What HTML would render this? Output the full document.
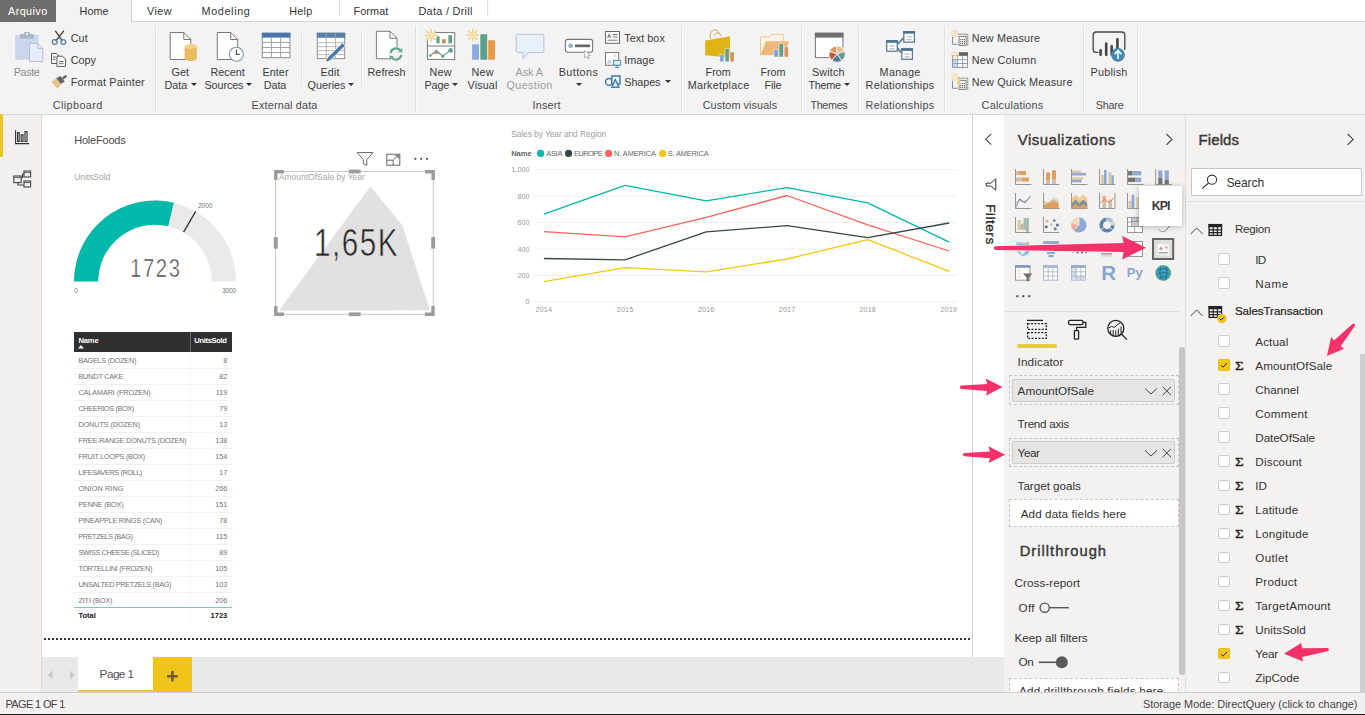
<!DOCTYPE html>
<html lang="en">
<head>
<meta charset="utf-8">
<title>Power BI Desktop</title>
<style>
*{box-sizing:border-box;margin:0;padding:0}
html,body{width:1365px;height:715px;overflow:hidden;background:#fff}
body{font-family:"Liberation Sans",sans-serif;color:#333;position:relative;font-size:12px}
.a{position:absolute}
.t{position:absolute;white-space:pre;line-height:1}
svg{position:absolute;overflow:visible}
.sep{position:absolute;width:1px;background:#e0e0e0;box-shadow:1px 0 0 #fafafa}
.cb{position:absolute;width:12px;height:11.6px;border:1px solid #cfcdcb;background:#fff;border-radius:2px}
.cb.on{background:#f2c811;border-color:#e9c00e}
.well{position:absolute;border:1px dashed #c8c6c4}
.pill{position:absolute;background:#e6e5e4;border:1px solid #cfcdcb;border-radius:2px}
.row{position:absolute;left:74px;width:158px;height:1px;background:#f1f1f1}
</style>
</head>
<body>
<div class="a" style="left:0;top:0;width:1365px;height:22px;background:#fff"></div>
<div class="a" style="left:0;top:21px;width:1365px;height:94px;background:#f3f3f3;border-top:1px solid #d4d4d4;border-bottom:1px solid #d8d8d8"></div>
<div class="a" style="left:0;top:0;width:56px;height:22px;background:#6e6e6e"></div>
<div class="a" style="left:56px;top:0;width:76px;height:22px;background:#f3f3f3;border-right:1px solid #d4d4d4"></div>
<div class="sep" style="left:339px;top:0;height:16px;background:#dcdcdc"></div>
<div class="sep" style="left:487px;top:0;height:16px;background:#dcdcdc"></div>
<div class="a" style="left:0;top:115px;width:42px;height:578px;background:#f1f0ef;border-right:1px solid #d9d9d9"></div>
<div class="a" style="left:0;top:114px;width:2.7px;height:43px;background:#e8c520"></div>
<div class="a" style="left:42px;top:115px;width:931px;height:542px;background:#fff"></div>
<div class="a" style="left:42px;top:657px;width:962px;height:36px;background:#e9e9e9"></div>
<div class="a" style="left:78px;top:657px;width:75px;height:36px;background:#fff;border-bottom:3px solid #e6c84f"></div>
<div class="a" style="left:153px;top:657px;width:39px;height:36px;background:#f0c41b"></div>
<div class="a" style="left:972px;top:115px;width:32px;height:542px;background:#fff;border-left:1px solid #d0d0d0"></div>
<div class="a" style="left:1004px;top:115px;width:182px;height:578px;background:#f3f2f1;border-right:1px solid #e0dedc"></div>
<div class="a" style="left:1186px;top:115px;width:179px;height:578px;background:#f3f2f1"></div>
<div class="a" style="left:0;top:692px;width:1365px;height:21px;background:#f1f0ef;border-top:1px solid #cfcfcf;z-index:5"></div>
<div class="a" style="left:0;top:713.6px;width:1365px;height:1.4px;background:#111;z-index:5"></div>
<div class="sep" style="left:155px;top:26px;height:86px"></div>
<div class="sep" style="left:415px;top:26px;height:86px"></div>
<div class="sep" style="left:681px;top:26px;height:86px"></div>
<div class="sep" style="left:801px;top:26px;height:86px"></div>
<div class="sep" style="left:858px;top:26px;height:86px"></div>
<div class="sep" style="left:944px;top:26px;height:86px"></div>
<div class="sep" style="left:1083px;top:26px;height:86px"></div>
<div class="sep" style="left:1137px;top:26px;height:86px"></div>
<div class="sep" style="left:301px;top:32px;height:54px"></div>
<div class="sep" style="left:361px;top:32px;height:54px"></div>
<svg style="left:190.5px;top:83.0px" width="6" height="3" viewBox="0 0 6 3"><path d="M0 0h6L3 3z" fill="#333"/></svg>
<svg style="left:246.4px;top:83.0px" width="6" height="3" viewBox="0 0 6 3"><path d="M0 0h6L3 3z" fill="#333"/></svg>
<svg style="left:348.3px;top:83.0px" width="6" height="3" viewBox="0 0 6 3"><path d="M0 0h6L3 3z" fill="#333"/></svg>
<svg style="left:451.5px;top:83.0px" width="6" height="3" viewBox="0 0 6 3"><path d="M0 0h6L3 3z" fill="#333"/></svg>
<svg style="left:575.7px;top:83.0px" width="6" height="3" viewBox="0 0 6 3"><path d="M0 0h6L3 3z" fill="#333"/></svg>
<svg style="left:664.5px;top:80.1px" width="6" height="3" viewBox="0 0 6 3"><path d="M0 0h6L3 3z" fill="#333"/></svg>
<svg style="left:843.5px;top:83.0px" width="6" height="3" viewBox="0 0 6 3"><path d="M0 0h6L3 3z" fill="#333"/></svg>
<svg style="left:0;top:0" width="1365" height="114" viewBox="0 0 1365 114"><rect x="15.2" y="35" width="23.3" height="24.8" fill="#ccd6ea"/><rect x="20" y="34" width="14" height="4.6" fill="#a9b7cb"/><rect x="24.2" y="32" width="5.6" height="3" fill="#a9b7cb"/><rect x="26" y="33" width="2" height="2" fill="#e8edf5"/><path d="M29.5 43.5h8.4l5 5v13h-13.4z" fill="#e8eef9" stroke="#b3bfd8" stroke-width="1"/><path d="M37.9 43.5v5h5" fill="none" stroke="#b3bfd8" stroke-width="1"/><g fill="none" stroke-linecap="round"><path d="M55.6 31.2L62 40.6M63.4 31.2L56 40.6" stroke="#4f4f4f" stroke-width="1.5"/><circle cx="54.7" cy="42" r="2.4" stroke="#5b7d9e" stroke-width="1.3"/><circle cx="63.3" cy="42" r="2.4" stroke="#5b7d9e" stroke-width="1.3"/></g><g fill="#f3f3f3" stroke="#5a5a5a" stroke-width="1"><path d="M51.5 53.5h5l2.5 2.5v7.5h-7.5z"/><path d="M57 56.2h5.5l3 3v7.2H57z" fill="#fff"/></g><path d="M53 57h3M53 59.5h2.5M59 61.5h4.5M59 63.7h4.5" stroke="#5a5a5a" stroke-width="0.9"/><path d="M51.3 82l5.2-3.4 4.6 5.6-3.4 4.6z" fill="#e7c083"/><path d="M56.2 78.3l4.2-2.4 4.4 5.6-3.8 2.6z" fill="#5e6468"/><path d="M62 77.6l3.8-2.6 1.4 1.8-3.8 2.6z" fill="#5e6468"/><path d="M170.2 32.5h13.600000000000001l7 7v20h-20.6z" fill="#fff" stroke="#787878" stroke-width="1"/><path d="M183.79999999999998 32.5v7h7" fill="none" stroke="#787878" stroke-width="1"/><path d="M184.6 46.5v12a6.1 2.4 0 0 0 12.2 0v-12z" fill="#e9bc5e"/><ellipse cx="190.7" cy="46.5" rx="6.1" ry="2.4" fill="#f2d089"/><path d="M217.3 32.5h13.399999999999999l7 7v20h-20.4z" fill="#fff" stroke="#787878" stroke-width="1"/><path d="M230.70000000000002 32.5v7h7" fill="none" stroke="#787878" stroke-width="1"/><circle cx="236.4" cy="54.2" r="7" fill="#fff" stroke="#7d96ba" stroke-width="1.1"/><path d="M236.4 49.4v5h3.4" fill="none" stroke="#555" stroke-width="1.2"/><rect x="262.3" y="33.2" width="27.6" height="24.5" fill="#fff" stroke="#8c8c8c" stroke-width="1"/><rect x="261.8" y="32.8" width="28.6" height="4.8" fill="#4675b0"/><path d="M262 42.5h28M262 47.5h28M262 52.5h28M271.4 37.5v20M280.6 37.5v20" stroke="#9a9a9a" stroke-width="0.9"/><rect x="317.3" y="33.2" width="27.4" height="25.4" fill="#fff" stroke="#8c8c8c" stroke-width="1"/><rect x="316.8" y="32.8" width="28.4" height="5" fill="#5781ab"/><path d="M317 42.7h28M317 46.7h28M317 50.7h28M317 54.7h28M326.3 33v25.5M335.5 33v25.5" stroke="#a4a4a4" stroke-width="0.8"/><path d="M326.2 61.6l1.4-4.2 14.8-14.6 2.9 2.9-14.8 14.6z" fill="#4a79af" stroke="#f3f3f3" stroke-width="1"/><path d="M326.2 61.6l1-3 2 2z" fill="#555"/><path d="M376.4 31.3h13.600000000000001l7 7v20.5h-20.6z" fill="#fff" stroke="#787878" stroke-width="1"/><path d="M390.0 31.3v7h7" fill="none" stroke="#787878" stroke-width="1"/><circle cx="396" cy="54" r="7.6" fill="#f3f3f3"/><g fill="none" stroke="#63a98e" stroke-width="2.2"><path d="M390.6 53a5.5 5.5 0 0 1 9.6-2.6"/><path d="M401.4 55a5.5 5.5 0 0 1-9.6 2.6"/></g><path d="M398.3 51.8l4.2 0.6-0.5-4.4z" fill="#63a98e"/><path d="M393.7 56.2l-4.2-0.6 0.5 4.4z" fill="#63a98e"/><rect x="427.4" y="32.6" width="27.3" height="26.8" fill="#fff" stroke="#777" stroke-width="1"/><path d="M427.4 46h27.3" stroke="#777" stroke-width="1"/><rect x="436.4" y="36.4" width="3.2" height="7" fill="#62a08e"/><rect x="442" y="39.2" width="3.6" height="4.2" fill="#c98b5c"/><rect x="448.4" y="35.2" width="3.6" height="8.2" fill="#62a08e"/><path d="M433.6 54l2.8-4.6 2.8 4.6z" fill="#d59463"/><path d="M430.3 55.6l6.1-5 6.4 5.6 7.5-5.8" fill="none" stroke="#6b9f95" stroke-width="1.2"/><circle cx="430.3" cy="55.6" r="1.3" fill="#6b9f95"/><circle cx="442.8" cy="56.2" r="1.6" fill="#6b9f95"/><circle cx="450.6" cy="50.4" r="2.3" fill="#6b9f95"/><circle cx="431.2" cy="35.6" r="5" fill="#f3f3f3"/><g stroke="#f1cf85" stroke-width="1.5" stroke-linecap="round"><line x1="433.4" y1="35.6" x2="437.2" y2="35.6"/><line x1="432.8" y1="37.2" x2="435.4" y2="39.8"/><line x1="431.2" y1="37.8" x2="431.2" y2="41.6"/><line x1="429.6" y1="37.2" x2="427.0" y2="39.8"/><line x1="429.0" y1="35.6" x2="425.2" y2="35.6"/><line x1="429.6" y1="34.0" x2="427.0" y2="31.4"/><line x1="431.2" y1="33.4" x2="431.2" y2="29.6"/><line x1="432.8" y1="34.0" x2="435.4" y2="31.4"/></g><circle cx="431.2" cy="35.6" r="2.7" fill="#f8e2a8"/><rect x="472.1" y="44.3" width="6.9" height="15.4" fill="#8aabda"/><rect x="480.3" y="34.2" width="6.9" height="25.5" fill="#5fa08c"/><rect x="488.2" y="40.2" width="6.8" height="19.5" fill="#ec9745"/><g stroke="#f1cf85" stroke-width="1.5" stroke-linecap="round"><line x1="475.0" y1="35.2" x2="478.4" y2="35.2"/><line x1="474.4" y1="36.8" x2="476.8" y2="39.2"/><line x1="472.8" y1="37.4" x2="472.8" y2="40.8"/><line x1="471.2" y1="36.8" x2="468.8" y2="39.2"/><line x1="470.6" y1="35.2" x2="467.2" y2="35.2"/><line x1="471.2" y1="33.6" x2="468.8" y2="31.2"/><line x1="472.8" y1="33.0" x2="472.8" y2="29.6"/><line x1="474.4" y1="33.6" x2="476.8" y2="31.2"/></g><circle cx="472.8" cy="35.2" r="2.7" fill="#f8e2a8"/><path d="M518.2 34.3h23.7a2 2 0 0 1 2 2v14.2a2 2 0 0 1-2 2h-13.6l-5.2 6v-6h-4.9a2 2 0 0 1-2-2V36.3a2 2 0 0 1 2-2z" fill="#e9f0fa" stroke="#b3c3dc" stroke-width="1"/><rect x="565.4" y="39.4" width="27.2" height="12.8" rx="2.2" fill="#fff" stroke="#777" stroke-width="1.1"/><circle cx="570.6" cy="45.8" r="2.3" fill="#8fb4cc"/><rect x="575" y="44.5" width="15" height="2.7" fill="#666"/><path d="M584.4 50.4l0.4 7.6 1.9-1.9 1.4 2.8 1.2-0.6-1.4-2.8 2.6-0.2z" fill="#fff" stroke="#999" stroke-width="0.7"/><rect x="605.5" y="31.5" width="14" height="11.8" fill="#fff" stroke="#666" stroke-width="1"/><path d="M607.6 38l1.6-4 1.6 4M608.2 36.7h2M612.6 34.5h5M612.6 37h5M607.5 40.2h10" fill="none" stroke="#666" stroke-width="0.9"/><rect x="605.5" y="52.6" width="13.2" height="12.6" fill="#fff" stroke="#777" stroke-width="1"/><path d="M606.5 63.5l2.8-4.2 2.8 4.2z" fill="#b7c7e0"/><circle cx="615" cy="55.8" r="1.3" fill="#e9d9b0"/><rect x="613.6" y="60.4" width="7" height="4.8" fill="#dff0f5" stroke="#4a90a8" stroke-width="1"/><path d="M617.1 65.2v2M615 67.3h4.4" stroke="#4a90a8" stroke-width="1"/><circle cx="608.9" cy="81.9" r="3.4" fill="none" stroke="#3a7ca8" stroke-width="1.5"/><rect x="611.8" y="76" width="8.2" height="8" fill="#f3f3f3" stroke="#3a7ca8" stroke-width="1.5"/><path d="M615.3 79.6l3.6 7.8h-7.2z" fill="#d6e6f0" stroke="#3a7ca8" stroke-width="1.3"/><path d="M710.4 38.4c-0.6-5 1.2-8.6 4.6-8.6 2.6 0 3.8 2 4 4.6M714.6 36c0.4-2.4 1.4-3.4 2.8-3.4 2 0 3.2 1.6 3.6 3.6" fill="none" stroke="#c7a544" stroke-width="0.9"/><path d="M705.2 40.6l24.8-4.4v21.6l-24.8-2.6z" fill="#e0b416"/><rect x="719.6" y="54.6" width="4.6" height="7.4" fill="#f3f3f3"/><rect x="724.8" y="48.4" width="4.6" height="13.6" fill="#f3f3f3"/><rect x="729.8" y="51.6" width="4.6" height="10.4" fill="#f3f3f3"/><rect x="720.1" y="55.1" width="3.6" height="6.4" fill="#7f9fd6"/><rect x="725.3" y="48.9" width="3.6" height="12.6" fill="#5fa08c"/><rect x="730.3" y="52.1" width="3.6" height="9.4" fill="#d98a5c"/><path d="M760.5 54.6V37h9.5l2-2.6h11.4v20.2z" fill="#fcf4e6" stroke="#ecc795" stroke-width="1"/><path d="M766 41.2h22.8l-3.6 13.5h-24.7z" fill="#ecb978"/><rect x="773.6" y="49.5" width="4.8" height="7.8" fill="#f3f3f3"/><rect x="778.8" y="43.3" width="4.8" height="14" fill="#f3f3f3"/><rect x="783.9" y="46.6" width="4.8" height="10.7" fill="#f3f3f3"/><rect x="774.2" y="50" width="3.8" height="6.8" fill="#7fa3d6"/><rect x="779.3" y="43.8" width="3.8" height="13" fill="#5fa08c"/><rect x="784.4" y="47.1" width="3.8" height="9.7" fill="#e0915e"/><rect x="815.4" y="33.2" width="27.5" height="24.4" fill="#fff" stroke="#777" stroke-width="1"/><rect x="814.9" y="32.8" width="28.5" height="4.8" fill="#707070"/><circle cx="837.1" cy="54.1" r="8.6" fill="#f3f3f3"/><path d="M837.1 54.1L829.58 51.36A8 8 0 0 1 836.40 46.13z" fill="#e8935c" stroke="#f7f3ee" stroke-width="0.9"/><path d="M837.1 54.1L836.40 46.13A8 8 0 0 1 844.62 51.36z" fill="#e9bd90" stroke="#f7f3ee" stroke-width="0.9"/><path d="M837.1 54.1L844.62 51.36A8 8 0 0 1 841.69 60.65z" fill="#6c9692" stroke="#f7f3ee" stroke-width="0.9"/><path d="M837.1 54.1L841.69 60.65A8 8 0 0 1 831.96 60.23z" fill="#4a7ba9" stroke="#f7f3ee" stroke-width="0.9"/><path d="M837.1 54.1L831.96 60.23A8 8 0 0 1 829.58 51.36z" fill="#c25a3c" stroke="#f7f3ee" stroke-width="0.9"/><path d="M897.6 44.2l5.8-6.2M897.6 48.2l3.8 4.6" stroke="#5a7d96" stroke-width="1.8" fill="none"/><rect x="886.7" y="40.8" width="10.6" height="10.4" fill="#fff" stroke="#5a7d96" stroke-width="1.3"/><rect x="886.0500000000001" y="40.15" width="11.9" height="2.6" fill="#4d748e"/><path d="M889.3000000000001 46.0h5.3999999999999995M889.3000000000001 48.8h5.3999999999999995" stroke="#a9a9a9" stroke-width="0.9"/><rect x="903.8" y="31.7" width="10.6" height="10.4" fill="#fff" stroke="#5a7d96" stroke-width="1.3"/><rect x="903.15" y="31.05" width="11.9" height="2.6" fill="#4d748e"/><path d="M906.4 36.9h5.3999999999999995M906.4 39.7h5.3999999999999995" stroke="#a9a9a9" stroke-width="0.9"/><rect x="901.8" y="48.9" width="10.6" height="10.4" fill="#fff" stroke="#5a7d96" stroke-width="1.3"/><rect x="901.15" y="48.25" width="11.9" height="2.6" fill="#4d748e"/><path d="M904.4 54.1h5.3999999999999995M904.4 56.9h5.3999999999999995" stroke="#a9a9a9" stroke-width="0.9"/><path d="M957.8000000000001 34.2h10v11.4" fill="none" stroke="#8a8a8a" stroke-width="0.9"/><path d="M952.5 36.7v7.6h5.2" fill="none" stroke="#7a8ea8" stroke-width="1"/><rect x="959.1" y="36.400000000000006" width="7" height="9" fill="#fff" stroke="#777" stroke-width="0.9"/><path d="M960.2 39.6h4.8M960.2 41.6h4.8M960.2 43.6h4.8" stroke="#666" stroke-width="1.1" stroke-dasharray="1.1 0.75"/><g stroke="#f0c674" stroke-width="1" stroke-linecap="round"><line x1="957.2" y1="33.4" x2="958.6" y2="33.4"/><line x1="956.6" y1="35.0" x2="957.5" y2="35.9"/><line x1="955.0" y1="35.6" x2="955.0" y2="37.0"/><line x1="953.4" y1="35.0" x2="952.5" y2="35.9"/><line x1="952.8" y1="33.4" x2="951.4" y2="33.4"/><line x1="953.4" y1="31.8" x2="952.5" y2="30.9"/><line x1="955.0" y1="31.2" x2="955.0" y2="29.8"/><line x1="956.6" y1="31.8" x2="957.5" y2="30.9"/></g><circle cx="955" cy="33.4" r="1.1" fill="#f8e2a8"/><path d="M957.8000000000001 78.2h10v11.4" fill="none" stroke="#8a8a8a" stroke-width="0.9"/><path d="M952.5 80.7v7.6h5.2" fill="none" stroke="#7a8ea8" stroke-width="1"/><rect x="959.1" y="80.4" width="7" height="9" fill="#fff" stroke="#777" stroke-width="0.9"/><path d="M960.2 83.60000000000001h4.8M960.2 85.60000000000001h4.8M960.2 87.60000000000001h4.8" stroke="#666" stroke-width="1.1" stroke-dasharray="1.1 0.75"/><path d="M959.4 78.4l-3.4 5.6h2.6l-2 5.2 5-6.6h-2.6l2.2-4.2z" fill="#f0cd7a"/><g stroke="#f0c674" stroke-width="1" stroke-linecap="round"><line x1="957.2" y1="77.2" x2="958.6" y2="77.2"/><line x1="956.6" y1="78.8" x2="957.5" y2="79.7"/><line x1="955.0" y1="79.4" x2="955.0" y2="80.8"/><line x1="953.4" y1="78.8" x2="952.5" y2="79.7"/><line x1="952.8" y1="77.2" x2="951.4" y2="77.2"/><line x1="953.4" y1="75.6" x2="952.5" y2="74.7"/><line x1="955.0" y1="75.0" x2="955.0" y2="73.6"/><line x1="956.6" y1="75.6" x2="957.5" y2="74.7"/></g><circle cx="955" cy="77.2" r="1.1" fill="#f8e2a8"/><rect x="952.5" y="55.6" width="15" height="11.8" fill="#fff" stroke="#8796aa" stroke-width="1"/><rect x="959" y="52.2" width="9" height="3.4" fill="#636363"/><rect x="953" y="59.8" width="4.2" height="7.2" fill="#c9d5e9"/><path d="M957.6 55.6v11.8M962.6 55.6v11.8M952.5 59.7h15M952.5 63.5h15" stroke="#8796aa" stroke-width="0.9"/><g stroke="#f0c674" stroke-width="1" stroke-linecap="round"><line x1="957.2" y1="55.2" x2="958.6" y2="55.2"/><line x1="956.6" y1="56.8" x2="957.5" y2="57.7"/><line x1="955.0" y1="57.4" x2="955.0" y2="58.8"/><line x1="953.4" y1="56.8" x2="952.5" y2="57.7"/><line x1="952.8" y1="55.2" x2="951.4" y2="55.2"/><line x1="953.4" y1="53.6" x2="952.5" y2="52.7"/><line x1="955.0" y1="53.0" x2="955.0" y2="51.6"/><line x1="956.6" y1="53.6" x2="957.5" y2="52.7"/></g><circle cx="955" cy="55.2" r="1.1" fill="#f8e2a8"/><path d="M1098.4 52.4h-2.2a3 3 0 0 1-3-3V35a3 3 0 0 1 3-3h25.6a3 3 0 0 1 3 3v15" fill="none" stroke="#444" stroke-width="1.3"/><g stroke="#444" stroke-width="2.6" stroke-linecap="round"><path d="M1100.6 50.2v4.6M1106.2 43.6v11.2M1111.7 46.4v8M1117.4 39.2v10"/></g><circle cx="1118" cy="54.8" r="6.9" fill="#4a86b0"/><path d="M1118 59v-7.6M1114.6 54.2l3.4-3.6 3.4 3.6" fill="none" stroke="#e9fbff" stroke-width="1.7"/></svg>
<svg style="left:0;top:114px" width="42" height="90" viewBox="0 114 42 90"><g fill="none" stroke="#2f2f2f" stroke-width="1.1"><path d="M15.6 130.2v13.4h13.4"/><rect x="17.6" y="132.6" width="1.6" height="8.8"/><rect x="21.2" y="134.8" width="1.8" height="6.6"/><rect x="25" y="131.6" width="2" height="9.8"/></g><g fill="#f1f0ef" stroke="#444" stroke-width="1.1"><rect x="13.8" y="176" width="7.4" height="6.6"/><rect x="24" y="171" width="6.6" height="6"/><rect x="24" y="181" width="6.6" height="6"/><path d="M21.2 177.5h1.4v-3.5h1.4M18 182.6v2.4h6" fill="none"/><path d="M13.8 177.6h7.4M24 172.6h6.6M24 182.6h6.6" fill="none" stroke-width="0.8"/></g></svg>
<svg style="left:60px;top:190px" width="200" height="110" viewBox="60 190 200 110"><path d="M74.00 281.50A81 81 0 0 1 236.00 281.50L211.80 281.50A56.8 56.8 0 0 0 98.20 281.50z" fill="#eaeaea"/><path d="M74.00 281.50A81 81 0 0 1 173.77 202.71L168.16 226.25A56.8 56.8 0 0 0 98.20 281.50z" fill="#01b8aa"/><path d="M183.6 232.2L195.7 211.3" stroke="#333" stroke-width="1.3"/></svg>
<svg style="left:265px;top:145px" width="180" height="180" viewBox="265 145 180 180"><path d="M278.8 310.8L370.3 186.5L402.2 225L430 310.2z" fill="#e1e1e1"/><rect x="275.5" y="171.5" width="157.8" height="142.8" fill="none" stroke="#c9c9c9" stroke-width="1"/><g fill="none" stroke="#9c9c9c" stroke-width="3.4"><path d="M275.8 180v-8.2h8.2M425 171.8h8.2v8.2M433 306v8.2h-8.2M284 314.2h-8.2v-8.2"/></g><g fill="#9c9c9c"><rect x="348.8" y="169.6" width="11.8" height="3.8"/><rect x="348.8" y="312.4" width="11.8" height="3.8"/><rect x="273.8" y="237.1" width="4" height="11.5"/><rect x="431.2" y="237.1" width="4" height="11.5"/></g><g fill="none" stroke="#666" stroke-width="1"><path d="M357.2 152.6h15.8l-6.2 7v5.8l-3.4-1.6v-4.2z"/><rect x="386.8" y="154.2" width="13" height="11"/><path d="M386.8 160.2h6.4v5M393.6 159.6l4.8-4M395.2 155.6h3.2v3"/></g><g fill="#555"><circle cx="415.4" cy="158.8" r="1.15"/><circle cx="421.2" cy="158.8" r="1.15"/><circle cx="427" cy="158.8" r="1.15"/></g></svg>
<div class="a" style="left:74px;top:332px;width:158px;height:19.5px;background:#303030"></div>
<div class="a" style="left:190px;top:332px;width:1px;height:19.5px;background:#6a6a6a"></div>
<div class="a" style="left:190px;top:351.5px;width:1px;height:272px;background:#f8f8f8"></div>
<svg style="left:78.4px;top:344.6px" width="6" height="3.4" viewBox="0 0 6 3.4"><path d="M0 3.4L3 0L6 3.4z" fill="#fff"/></svg>
<div class="row" style="top:367.5px"></div>
<div class="row" style="top:383.5px"></div>
<div class="row" style="top:399.5px"></div>
<div class="row" style="top:415.6px"></div>
<div class="row" style="top:431.6px"></div>
<div class="row" style="top:447.6px"></div>
<div class="row" style="top:463.6px"></div>
<div class="row" style="top:479.6px"></div>
<div class="row" style="top:495.7px"></div>
<div class="row" style="top:511.7px"></div>
<div class="row" style="top:527.7px"></div>
<div class="row" style="top:543.7px"></div>
<div class="row" style="top:559.7px"></div>
<div class="row" style="top:575.8px"></div>
<div class="row" style="top:591.8px"></div>
<div class="a" style="left:74px;top:607px;width:158px;height:1.2px;background:#74c8d3"></div>
<svg style="left:500px;top:120px" width="470" height="200" viewBox="500 120 470 200"><path d="M535 169.8H957" stroke="#eeeeee" stroke-width="1"/><path d="M535 196.2H957" stroke="#eeeeee" stroke-width="1"/><path d="M535 222.6H957" stroke="#eeeeee" stroke-width="1"/><path d="M535 249.0H957" stroke="#eeeeee" stroke-width="1"/><path d="M535 275.4H957" stroke="#eeeeee" stroke-width="1"/><path d="M535 301.8H957" stroke="#eeeeee" stroke-width="1"/><circle cx="540.6" cy="153.4" r="3.6" fill="#01b8aa"/><circle cx="568.6" cy="153.4" r="3.6" fill="#374649"/><circle cx="608.6" cy="153.4" r="3.6" fill="#fd625e"/><circle cx="662.6" cy="153.4" r="3.6" fill="#f2c80f"/><path d="M543.9 214.2L625.0 185.4L706.2 200.8L787.0 187.6L867.7 202.8L949.2 242.2" fill="none" stroke="#01b8aa" stroke-width="1.3" stroke-linejoin="round"/><path d="M543.9 231.6L625.0 236.9L706.2 217.3L787.0 195.5L867.7 224.9L949.2 251.0" fill="none" stroke="#fd625e" stroke-width="1.3" stroke-linejoin="round"/><path d="M543.9 258.5L625.0 259.9L706.2 231.9L787.0 225.7L867.7 237.6L949.2 223.0" fill="none" stroke="#374649" stroke-width="1.3" stroke-linejoin="round"/><path d="M543.9 281.7L625.0 267.7L706.2 271.9L787.0 259.0L867.7 239.6L949.2 271.3" fill="none" stroke="#f2c80f" stroke-width="1.3" stroke-linejoin="round"/></svg>
<div class="a" style="left:44px;top:638px;width:926px;height:2px;background:repeating-linear-gradient(90deg,#333 0,#333 2px,transparent 2px,transparent 4px)"></div>
<svg style="left:42px;top:657px" width="160" height="36" viewBox="42 657 160 36"><path d="M52.5 675l-4.6 0 4.6-4.4zM52.5 675l-4.6 0 4.6 4.4z" fill="#c9c9c9"/><path d="M70 670.6l4.6 4.4-4.6 4.4z" fill="#c9c9c9"/><path d="M172.4 671v10.6M167.1 676.3h10.6" stroke="#6e5f33" stroke-width="2.6"/></svg>
<svg style="left:973px;top:114px" width="31" height="140" viewBox="973 114 31 140"><path d="M991.2 133.8l-5.4 5.4 5.4 5.4" fill="none" stroke="#444" stroke-width="1.1"/><path d="M995.8 178.8v11.4l-5-4.2h-4.6v-2.8h4.6z" fill="none" stroke="#333" stroke-width="1" stroke-linejoin="round"/></svg>
<div class="t" style="left:989.6px;top:203.5px;font-size:13.7px;-webkit-text-stroke:0.3px #252423;color:#252423;transform-origin:0 0;transform:rotate(90deg) translate(0,-50%);letter-spacing:0.5px">Filters</div>
<svg style="left:1160px;top:130px" width="20" height="20" viewBox="1160 130 20 20"><path d="M1166.4 134l5.6 5.4-5.6 5.4" fill="none" stroke="#444" stroke-width="1.1"/></svg>
<svg style="left:1004px;top:160px;opacity:0.9" width="182" height="150" viewBox="1004 160 182 150"><g transform="translate(1015 169)"><path d="M0.5 0v15.5h16" fill="none" stroke="#8b8b8b" stroke-width="1"/><rect x="1" y="2" width="3" height="4" fill="#c9b9a6"/><rect x="4" y="2" width="7" height="4" fill="#e3964c"/><rect x="1" y="8.5" width="6" height="4" fill="#c9b9a6"/><rect x="7" y="8.5" width="7" height="4" fill="#e3964c"/></g><g transform="translate(1043 169)"><path d="M0.5 0v15.5h16" fill="none" stroke="#8b8b8b" stroke-width="1"/><rect x="3" y="3.5" width="4" height="8" fill="#e3964c"/><rect x="3" y="11.5" width="4" height="3.5" fill="#c9b9a6"/><rect x="9" y="1.2" width="4" height="9" fill="#e3964c"/><rect x="9" y="10.2" width="4" height="4.8" fill="#c9b9a6"/></g><g transform="translate(1071 169)"><path d="M0.5 0v15.5h16" fill="none" stroke="#8b8b8b" stroke-width="1"/><rect x="1" y="1.5" width="9" height="2.4" fill="#d8c4a0"/><rect x="1" y="3.9" width="14" height="2.6" fill="#8f9fd4"/><rect x="1" y="8.3" width="11" height="2.4" fill="#d8c4a0"/><rect x="1" y="10.7" width="9.5" height="2.6" fill="#8d9fb8"/></g><g transform="translate(1099 169)"><path d="M0.5 0v15.5h16" fill="none" stroke="#8b8b8b" stroke-width="1"/><rect x="2" y="6" width="3" height="9" fill="#d8c4a0"/><rect x="5" y="1" width="2.6" height="14" fill="#86a2cf"/><rect x="9.4" y="3.4" width="3" height="11.6" fill="#d8c4a0"/><rect x="12.4" y="6.4" width="2.4" height="8.6" fill="#86a2cf"/></g><g transform="translate(1127 169)"><path d="M0.5 0v15.5h16" fill="none" stroke="#8b8b8b" stroke-width="1"/><rect x="1" y="2" width="4.6" height="4.4" fill="#676767"/><rect x="5.6" y="2" width="8.6" height="4.4" fill="#86a2cf"/><rect x="1" y="8.6" width="7.6" height="4.4" fill="#676767"/><rect x="8.6" y="8.6" width="5.6" height="4.4" fill="#86a2cf"/></g><g transform="translate(1155.2 169)"><path d="M0.5 0v15.5h16" fill="none" stroke="#8b8b8b" stroke-width="1"/><rect x="3" y="1.4" width="4.2" height="7.4" fill="#86a2cf"/><rect x="3" y="8.8" width="4.2" height="6.2" fill="#676767"/><rect x="9.4" y="1.4" width="4.2" height="9.2" fill="#86a2cf"/><rect x="9.4" y="10.6" width="4.2" height="4.4" fill="#676767"/></g><g transform="translate(1015 193)"><path d="M0.5 0v15.5h16" fill="none" stroke="#8b8b8b" stroke-width="1"/><path d="M1 10.4l3.6-3.6 3.4 2.4 3.2-1.6 4.6-4.4" fill="none" stroke="#86a2cf" stroke-width="1"/><path d="M1 13.8l3.6-8 5.4 4 5.6-6.6" fill="none" stroke="#75758a" stroke-width="1"/></g><g transform="translate(1043 193)"><path d="M0.5 0v15.5h16" fill="none" stroke="#8b8b8b" stroke-width="1"/><path d="M1 7l4 3 5.6-6.6 5 3.4V15H1z" fill="#efd9bd"/><path d="M1 8.4l3.6 2.8 6-4.4 5 2.8" fill="none" stroke="#b9c0b0" stroke-width="1.4"/><path d="M1 12l3.4-1.4 6-2.6 5.2 2.4V15.2H1z" fill="#e3964c"/></g><g transform="translate(1071 193)"><path d="M1 5l3.6-3.6 3.8 3.6 3.8-3.6 4 3.6V15.5H1z" fill="#ecc98a"/><path d="M1 10l3.6-3.4 3.8 3.4 3.8-3.4 4 3.4v5.5H1z" fill="#7d8791"/><path d="M1 14l3.6-3 3.8 3 3.8-3 4 3v1.5H1z" fill="#d99a5e"/><path d="M0.5 0v15.5h16" fill="none" stroke="#a48a6a" stroke-width="1"/></g><g transform="translate(1099 193)"><path d="M0.5 0v15.5h15.5V0" fill="none" stroke="#8b8b8b" stroke-width="1"/><rect x="3.4" y="3" width="3.6" height="6" fill="#eaa77a"/><rect x="3.4" y="9" width="3.6" height="6" fill="#c9b9a6"/><rect x="9.4" y="6.6" width="3.6" height="4" fill="#eaa77a"/><rect x="9.4" y="10.6" width="3.6" height="4.4" fill="#c9b9a6"/><path d="M1.5 9.6l4-3.2 4.6 3.6 5-5.6" fill="none" stroke="#d98b62" stroke-width="1"/></g><g transform="translate(1127 193)"><path d="M0.5 0v15.5h15.5V0" fill="none" stroke="#8b8b8b" stroke-width="1"/><rect x="1.6" y="8" width="3" height="7" fill="#d8c4a0"/><rect x="4.6" y="1.6" width="2.8" height="13.4" fill="#86a2cf"/><rect x="9.4" y="4" width="3" height="11" fill="#d8c4a0"/><rect x="12.4" y="7" width="2.4" height="8" fill="#86a2cf"/></g><g transform="translate(1015 217)"><path d="M0.5 0v15.5h16" fill="none" stroke="#8b8b8b" stroke-width="1"/><rect x="2.6" y="3" width="3.2" height="10" fill="#d8c4a0"/><rect x="5.8" y="6.6" width="2.8" height="6" fill="#c8a98a"/><rect x="8.6" y="1" width="2.6" height="11.8" fill="#9db8a6"/><rect x="11.2" y="1" width="2.6" height="14" fill="#9bb0a4"/></g><g transform="translate(1043 217)"><path d="M0.5 0v15.5h16" fill="none" stroke="#8b8b8b" stroke-width="1"/><circle cx="4" cy="4.2" r="1.4" fill="#d9a98a"/><circle cx="11.2" cy="3.4" r="1.5" fill="#6d8a9a"/><circle cx="8.4" cy="7.8" r="1.5" fill="#d7c4a4"/><circle cx="3.2" cy="9.8" r="1.6" fill="#4d6a8a"/><circle cx="14.4" cy="8" r="1.6" fill="#4d6a8a"/><circle cx="12.2" cy="11.8" r="1.6" fill="#5d7a8a"/></g><g transform="translate(1071 217)"><circle cx="8" cy="8" r="7.6" fill="#86a2cf"/><path d="M8 8V0.4A7.6 7.6 0 0 0 0.9 5.4z" fill="#efd8b8"/><path d="M8 8L0.9 5.4A7.6 7.6 0 0 0 2.6 13.4z" fill="#eaa88a"/><path d="M8 8V0.4M8 8L0.9 5.4M8 8L2.6 13.4" stroke="#f3f2f1" stroke-width="0.7"/></g><g transform="translate(1099 217)"><circle cx="8" cy="8" r="5.8" fill="none" stroke="#4a7aa6" stroke-width="3.6"/><circle cx="8" cy="8" r="5.8" fill="none" stroke="#9cc0e0" stroke-width="3.6" stroke-dasharray="5 31.4" stroke-dashoffset="-27"/><circle cx="8" cy="8" r="5.8" fill="none" stroke="#e6d2b0" stroke-width="3.6" stroke-dasharray="4.4 32" stroke-dashoffset="-32.4"/><path d="M8 0.4v3.8M14.6 4.2l-3.2 1.8M13.6 13.2l-2.6-2.6M2.2 12.6l2.8-2.2" stroke="#f3f2f1" stroke-width="0.9"/></g><g transform="translate(1127 217)"><rect x="0.5" y="0.5" width="15" height="15" fill="#fff" stroke="#8b8b8b" stroke-width="1"/><rect x="4.6" y="1" width="10.4" height="8" fill="#c3c8d4"/><path d="M4.6 0.5v9M0.5 5h4.1M4.6 4.4h10.9M0.5 9.5h15M7.6 9.5v6M10.4 0.5v3.9" stroke="#8b8b8b" stroke-width="0.9" fill="none"/></g><g transform="translate(1155.2 217)"><path d="M3.6 12.4c2 3 5.6 3 7.6 0.4l3.6-4" fill="none" stroke="#777" stroke-width="0.9"/><path d="M9.4 14.8l5-6.2" stroke="#8a9a8a" stroke-width="0.9"/></g><g transform="translate(1015 241)"><path d="M1 1.6c3-1 7 1.4 11.6-0.6l1 3H1.6z" fill="#9dbbe0"/><path d="M12.6 0.6l1.4 3.2" stroke="#e6b27a" stroke-width="1.4"/><path d="M1.6 10.4l4.4 0.4 1 3.4 3.4-4 4.6-0.6-1.6 3.6-6 2.4z" fill="#8fb3da"/></g><g transform="translate(1043 241)"><rect x="0" y="0" width="16" height="3" fill="#8fa3c4"/><rect x="4" y="11" width="8" height="2" fill="#7fa0cc"/><rect x="5.4" y="14" width="5.2" height="2.2" fill="#7fa0cc"/></g><g transform="translate(1071 241)"><circle cx="6.4" cy="11.4" r="1" fill="#555"/><circle cx="11" cy="11.4" r="1" fill="#444"/><circle cx="15" cy="11.4" r="0.9" fill="#777"/><circle cx="2" cy="11.4" r="0.9" fill="#e0b088"/></g><g transform="translate(1099 241)"><rect x="2" y="12" width="11" height="1.6" fill="#9a9a9a"/><rect x="2.6" y="14.4" width="10" height="1" fill="#c4c4c4"/></g><g transform="translate(1127 241)"><rect x="0.5" y="0.5" width="15" height="15" fill="#fff" stroke="#8b8b8b" stroke-width="1"/></g><g transform="translate(1155.2 241)"><rect x="-2.2" y="-2" width="20.2" height="20" fill="#dcdcdc" stroke="#555" stroke-width="2"/><rect x="2" y="3.2" width="12" height="11" fill="#f8f8f8"/><path d="M3.8 8.4l2-2.8 2 2.8z" fill="#8a8a8a"/><path d="M9.2 5.6h4l-2 2.8z" fill="#d9a98a"/><path d="M3.4 11.8h9.2" stroke="#9a9a9a" stroke-width="1.4"/></g><g transform="translate(1015 265)"><rect x="0.5" y="0.8" width="14.4" height="14.4" fill="#fff" stroke="#8b8b8b" stroke-width="1"/><rect x="0" y="0.3" width="15.4" height="2.4" fill="#6e8fb4"/><rect x="3.4" y="4.6" width="1.6" height="1.6" fill="#b7cbe6"/><rect x="3.4" y="8" width="1.6" height="1.6" fill="#ecc79a"/><rect x="3.4" y="11.4" width="1.6" height="1.6" fill="#ecc79a"/><path d="M8 8.4h9.4l-3.6 4.2v4.2l-2.2-1.4v-2.8z" fill="#5f5f5f"/></g><g transform="translate(1043 265)"><rect x="0.5" y="0.8" width="14" height="14.4" fill="#fff" stroke="#a4b2c8" stroke-width="1"/><rect x="0" y="0.3" width="15" height="2.6" fill="#9fb2cf"/><path d="M5.2 2.8v12.4M9.8 2.8v12.4M0.5 6.8h14M0.5 11h14" stroke="#a4b2c8" stroke-width="0.9"/></g><g transform="translate(1071 265)"><rect x="0.5" y="0.8" width="14" height="14.4" fill="#fff" stroke="#a4b2c8" stroke-width="1"/><rect x="0" y="0.3" width="15" height="2.6" fill="#8ba3c4"/><rect x="0.8" y="2.9" width="4.2" height="12" fill="#d3dcea"/><rect x="5" y="11" width="9.4" height="4" fill="#cdd7e8"/><path d="M5.2 2.8v12.4M9.8 2.8v12.4M0.5 6.8h14M0.5 11h14" stroke="#a4b2c8" stroke-width="0.9"/></g><g transform="translate(1155.2 265)"><circle cx="8" cy="8" r="7.6" fill="#2a9ab8"/><circle cx="8" cy="8" r="7.4" fill="none" stroke="#4aa85a" stroke-width="1.2" stroke-dasharray="1.4 1"/><path d="M3 5.4c3-2 7-2.2 10-0.6M2 9.6c4-2.4 8-2.6 12-0.8M4.4 13.2c2.6-1.8 5.4-2 8-1M6 1.6c-2 4-1.6 9 1.6 13M10.6 1.4c2 4 1.6 9-1 13" fill="none" stroke="#0e5f86" stroke-width="1"/></g><g fill="#333"><rect x="1016.3" y="295.2" width="2" height="2"/><rect x="1022.3" y="295.2" width="2" height="2"/><rect x="1028.3" y="295.2" width="2" height="2"/></g></svg>
<div class="a" style="left:1139px;top:186px;width:43.2px;height:39.8px;background:#fff;box-shadow:0 0 5px rgba(0,0,0,0.18),0 2px 6px rgba(0,0,0,0.10)"></div>
<svg style="left:990px;top:230px" width="165" height="36" viewBox="990 230 165 36"><path d="M995.6 246.3L1123.6 242.9L1122.2 236.1L1146 247.7L1122.2 259.4L1123.6 252L995.6 249.9a1.8 1.8 0 0 1 0-3.6z" fill="#f4316a"/></svg>
<div class="a" style="left:1005px;top:311px;width:174px;height:1px;background:#dedcda"></div>
<svg style="left:1010px;top:315px" width="130" height="36" viewBox="1010 315 130 36"><g fill="none" stroke="#222" stroke-width="1.3"><path d="M1027 320.4h16"/><rect x="1027.6" y="323.6" width="18.8" height="5.8" stroke-dasharray="2 1.4"/><rect x="1027.6" y="332.6" width="18.8" height="5.8" stroke-dasharray="2 1.4"/><rect x="1068.6" y="320.4" width="14.4" height="4.2" rx="1.4"/><path d="M1083 322.4h2.8v5h-9.2v3.2"/><rect x="1074.4" y="330.6" width="4.2" height="8.6" rx="0.8"/><circle cx="1115.8" cy="328.4" r="8"/><path d="M1121.6 334.2l5.4 5.4"/><path d="M1108.6 328l3-1.6 2.8 1 5.6-4.6" stroke-width="1"/><path d="M1110.6 334v-3.6M1113.2 335.6v-5.6M1115.8 336v-5.6M1118.4 335.4v-6.8M1121 333.6v-7" stroke-width="1"/></g></svg>
<div class="a" style="left:1017px;top:344px;width:40px;height:3.8px;background:#e8c94a;border-radius:2px"></div>
<div class="well" style="left:1009px;top:375px;width:170px;height:29.5px"></div><div class="pill" style="left:1012px;top:379.4px;width:163.4px;height:22.2px"></div>
<div class="well" style="left:1009px;top:437.5px;width:170px;height:29.5px"></div><div class="pill" style="left:1012px;top:441.4px;width:163.4px;height:22.2px"></div>
<div class="well" style="left:1009px;top:498.5px;width:170px;height:28.5px;background:#fff"></div>
<svg style="left:1140px;top:383.4px" width="36" height="16" viewBox="1140 383.4 36 16"><g fill="none" stroke="#444" stroke-width="1"><path d="M1145 388.79999999999995l6 5.6 6-5.6"/><path d="M1162.6 387.2l8.4 8.4M1171 387.2l-8.4 8.4"/></g></svg>
<svg style="left:1140px;top:445.4px" width="36" height="16" viewBox="1140 445.4 36 16"><g fill="none" stroke="#444" stroke-width="1"><path d="M1145 450.79999999999995l6 5.6 6-5.6"/><path d="M1162.6 449.2l8.4 8.4M1171 449.2l-8.4 8.4"/></g></svg>
<svg style="left:1036px;top:600px" width="40" height="72" viewBox="1036 600 40 72"><path d="M1049.6 607.7h19.2" stroke="#555" stroke-width="1.4"/><circle cx="1044.7" cy="607.7" r="4.6" fill="#f3f2f1" stroke="#555" stroke-width="1.4"/><path d="M1038.7 662.3h18" stroke="#555" stroke-width="1.6"/><circle cx="1061.8" cy="662.3" r="6" fill="#5a5a5a"/></svg>
<div class="well" style="left:1008.8px;top:678.3px;width:170.2px;height:28px;background:#fff"></div>
<div class="a" style="left:1179.4px;top:347px;width:5.6px;height:328px;background:#c8c6c4;border-radius:3px"></div>
<svg style="left:1340px;top:130px" width="20" height="20" viewBox="1340 130 20 20"><path d="M1347.6 134l5.6 5.4-5.6 5.4" fill="none" stroke="#444" stroke-width="1.1"/></svg>
<div class="a" style="left:1190.5px;top:168px;width:171px;height:28.4px;background:#fff;border:1px solid #c8c6c4;border-radius:1px"></div>
<svg style="left:1200px;top:172px" width="20" height="20" viewBox="1200 172 20 20"><circle cx="1212" cy="179.7" r="4.6" fill="none" stroke="#333" stroke-width="1.1"/><path d="M1208.6 183l-6.4 5.6" stroke="#333" stroke-width="1.1"/></svg>
<div class="a" style="left:1187px;top:201px;width:178px;height:1px;background:#e3e1df"></div>
<svg style="left:1189.8px;top:226.6px" width="14" height="8" viewBox="0 0 14 8"><path d="M0.6 7l6-6 6 6" fill="none" stroke="#444" stroke-width="1"/></svg>
<svg style="left:1209.4px;top:224px" width="18" height="18" viewBox="0 0 18 18"><rect x="0.1" y="0.6" width="12.4" height="10.8" fill="none" stroke="#252423" stroke-width="1.3"/><rect x="-0.5" y="0" width="13.6" height="3.2" fill="#252423"/><path d="M4.2 3v8.4M8.4 3v8.4M0 5.8h12.6M0 8.6h12.6" stroke="#252423" stroke-width="1.2"/></svg>
<svg style="left:1189.8px;top:308.6px" width="14" height="8" viewBox="0 0 14 8"><path d="M0.6 7l6-6 6 6" fill="none" stroke="#444" stroke-width="1"/></svg>
<svg style="left:1209.4px;top:306px" width="18" height="18" viewBox="0 0 18 18"><rect x="0.1" y="0.6" width="12.4" height="10.8" fill="none" stroke="#252423" stroke-width="1.3"/><rect x="-0.5" y="0" width="13.6" height="3.2" fill="#252423"/><path d="M4.2 3v8.4M8.4 3v8.4M0 5.8h12.6M0 8.6h12.6" stroke="#252423" stroke-width="1.2"/><circle cx="12.8" cy="12.6" r="4.7" fill="#edc626"/><path d="M10.6 12.6l1.6 1.6 2.8-3" fill="none" stroke="#252423" stroke-width="1"/></svg>
<div class="cb" style="left:1218.3px;top:253.3px"></div>
<div class="cb" style="left:1218.3px;top:277.4px"></div>
<div class="cb" style="left:1218.3px;top:335.2px"></div>
<div class="cb on" style="left:1218.3px;top:359.2px"></div>
<svg style="left:1218.3px;top:359.1px" width="12" height="12" viewBox="0 0 12 12"><path d="M3 6.2l2 2 4-4.4" fill="none" stroke="#252423" stroke-width="1"/></svg>
<div class="cb" style="left:1218.3px;top:383.3px"></div>
<div class="cb" style="left:1218.3px;top:407.3px"></div>
<div class="cb" style="left:1218.3px;top:431.4px"></div>
<div class="cb" style="left:1218.3px;top:455.4px"></div>
<div class="cb" style="left:1218.3px;top:479.5px"></div>
<div class="cb" style="left:1218.3px;top:503.6px"></div>
<div class="cb" style="left:1218.3px;top:527.6px"></div>
<div class="cb" style="left:1218.3px;top:551.6px"></div>
<div class="cb" style="left:1218.3px;top:575.7px"></div>
<div class="cb" style="left:1218.3px;top:599.8px"></div>
<div class="cb" style="left:1218.3px;top:623.8px"></div>
<div class="cb on" style="left:1218.3px;top:647.8px"></div>
<svg style="left:1218.3px;top:647.6px" width="12" height="12" viewBox="0 0 12 12"><path d="M3 6.2l2 2 4-4.4" fill="none" stroke="#252423" stroke-width="1"/></svg>
<div class="cb" style="left:1218.3px;top:671.9px"></div>
<div class="a" style="left:1360px;top:354px;width:5px;height:338px;background:#d0cfce"></div>
<svg style="left:955px;top:370px" width="60" height="110" viewBox="955 370 60 110"><path d="M961.6 385.5L987.2 383.9L985.6 378.6L1002.6 387L985.8 395.8L987.2 390.9L961.6 388.9a1.7 1.7 0 0 1 0-3.4z" fill="#f4316a"/><path d="M964.6 452.9L990 451.5L988.4 446.2L1005.2 454.7L988.6 463L990 458.3L964.6 456.3a1.7 1.7 0 0 1 0-3.4z" fill="#f4316a"/></svg>
<svg style="left:1270px;top:315px" width="95" height="360" viewBox="1270 315 95 360"><path d="M1352.2 324.2L1334 340.6L1331.2 337.1L1326.9 355.9L1344 348.7L1340.7 346.2L1354.7 326.2a1.5 1.5 0 0 0-2.5-2z" fill="#f4316a"/><path d="M1327.6 648.1L1302.3 648.3L1301.2 642.9L1284 653.8L1303.2 661.5L1302 656.9L1327.8 651.2a1.6 1.6 0 0 0-0.2-3.1z" fill="#f4316a"/></svg>
<!-- text -->
<span class="t" style="left:8.0px;top:5.9px;font-size:10.8px;color:#fff;letter-spacing:0.43px;">Arquivo</span>
<span class="t" style="left:79.6px;top:5.9px;font-size:10.8px;color:#333;letter-spacing:0.05px;">Home</span>
<span class="t" style="left:147.0px;top:5.9px;font-size:10.8px;color:#333;letter-spacing:0.45px;">View</span>
<span class="t" style="left:201.5px;top:5.9px;font-size:10.8px;color:#333;letter-spacing:0.65px;">Modeling</span>
<span class="t" style="left:289.2px;top:5.9px;font-size:10.8px;color:#333;letter-spacing:0.25px;">Help</span>
<span class="t" style="left:353.4px;top:5.9px;font-size:10.8px;color:#333;letter-spacing:0.15px;">Format</span>
<span class="t" style="left:418.5px;top:5.9px;font-size:10.8px;color:#333;letter-spacing:0.32px;">Data / Drill</span>
<span class="t" style="left:13.7px;top:66.6px;font-size:10.8px;color:#8c8c8c;letter-spacing:-0.36px;">Paste</span>
<span class="t" style="left:70.7px;top:32.9px;font-size:10.8px;color:#3a3a3a;letter-spacing:0.10px;">Cut</span>
<span class="t" style="left:70.7px;top:55.3px;font-size:10.8px;color:#3a3a3a;letter-spacing:0.02px;">Copy</span>
<span class="t" style="left:70.7px;top:77.2px;font-size:10.8px;color:#3a3a3a;letter-spacing:0.20px;">Format Painter</span>
<span class="t" style="left:52.8px;top:100.2px;font-size:10.8px;color:#4a4a4a;letter-spacing:0.40px;">Clipboard</span>
<span class="t" style="left:171.6px;top:66.6px;font-size:10.8px;color:#3a3a3a;letter-spacing:-0.04px;">Get</span>
<span class="t" style="left:164.6px;top:79.9px;font-size:10.8px;color:#3a3a3a;letter-spacing:-0.03px;">Data</span>
<span class="t" style="left:210.6px;top:66.6px;font-size:10.8px;color:#3a3a3a;letter-spacing:-0.02px;">Recent</span>
<span class="t" style="left:204.5px;top:79.9px;font-size:10.8px;color:#3a3a3a;letter-spacing:-0.10px;">Sources</span>
<span class="t" style="left:262.4px;top:66.6px;font-size:10.8px;color:#3a3a3a;letter-spacing:0.08px;">Enter</span>
<span class="t" style="left:263.7px;top:79.9px;font-size:10.8px;color:#3a3a3a;letter-spacing:-0.05px;">Data</span>
<span class="t" style="left:251.6px;top:100.2px;font-size:10.8px;color:#4a4a4a;letter-spacing:0.18px;">External data</span>
<span class="t" style="left:320.5px;top:66.6px;font-size:10.8px;color:#3a3a3a;letter-spacing:0.10px;">Edit</span>
<span class="t" style="left:307.6px;top:79.9px;font-size:10.8px;color:#3a3a3a;letter-spacing:0.01px;">Queries</span>
<span class="t" style="left:367.5px;top:66.6px;font-size:10.8px;color:#3a3a3a;letter-spacing:0.04px;">Refresh</span>
<span class="t" style="left:429.5px;top:66.6px;font-size:10.8px;color:#3a3a3a;letter-spacing:0.26px;">New</span>
<span class="t" style="left:424.6px;top:79.9px;font-size:10.8px;color:#3a3a3a;letter-spacing:-0.20px;">Page</span>
<span class="t" style="left:471.6px;top:66.6px;font-size:10.8px;color:#3a3a3a;letter-spacing:0.20px;">New</span>
<span class="t" style="left:467.6px;top:79.9px;font-size:10.8px;color:#3a3a3a;letter-spacing:0.11px;">Visual</span>
<span class="t" style="left:515.5px;top:66.6px;font-size:10.8px;color:#9b9b9b;letter-spacing:-0.06px;">Ask A</span>
<span class="t" style="left:506.6px;top:79.9px;font-size:10.8px;color:#9b9b9b;letter-spacing:0.36px;">Question</span>
<span class="t" style="left:558.7px;top:66.6px;font-size:10.8px;color:#3a3a3a;letter-spacing:0.43px;">Buttons</span>
<span class="t" style="left:624.3px;top:32.7px;font-size:10.8px;color:#3a3a3a;letter-spacing:0.04px;">Text box</span>
<span class="t" style="left:624.3px;top:55.0px;font-size:10.8px;color:#3a3a3a;letter-spacing:0.02px;">Image</span>
<span class="t" style="left:624.3px;top:77.0px;font-size:10.8px;color:#3a3a3a;letter-spacing:-0.09px;">Shapes</span>
<span class="t" style="left:532.5px;top:100.2px;font-size:10.8px;color:#4a4a4a;letter-spacing:0.20px;">Insert</span>
<span class="t" style="left:705.6px;top:66.6px;font-size:10.8px;color:#3a3a3a;letter-spacing:-0.05px;">From</span>
<span class="t" style="left:687.7px;top:79.9px;font-size:10.8px;color:#3a3a3a;letter-spacing:0.27px;">Marketplace</span>
<span class="t" style="left:760.5px;top:66.6px;font-size:10.8px;color:#3a3a3a;letter-spacing:-0.05px;">From</span>
<span class="t" style="left:764.5px;top:79.9px;font-size:10.8px;color:#3a3a3a;letter-spacing:-0.10px;">File</span>
<span class="t" style="left:702.7px;top:100.2px;font-size:10.8px;color:#4a4a4a;letter-spacing:0.10px;">Custom visuals</span>
<span class="t" style="left:811.9px;top:66.6px;font-size:10.8px;color:#3a3a3a;letter-spacing:0.16px;">Switch</span>
<span class="t" style="left:808.4px;top:79.9px;font-size:10.8px;color:#3a3a3a;letter-spacing:-0.26px;">Theme</span>
<span class="t" style="left:810.4px;top:100.2px;font-size:10.8px;color:#4a4a4a;letter-spacing:-0.34px;">Themes</span>
<span class="t" style="left:879.6px;top:66.6px;font-size:10.8px;color:#3a3a3a;letter-spacing:0.33px;">Manage</span>
<span class="t" style="left:865.6px;top:79.9px;font-size:10.8px;color:#3a3a3a;letter-spacing:0.31px;">Relationships</span>
<span class="t" style="left:865.6px;top:100.2px;font-size:10.8px;color:#4a4a4a;letter-spacing:0.31px;">Relationships</span>
<span class="t" style="left:971.7px;top:32.7px;font-size:10.8px;color:#3a3a3a;letter-spacing:0.17px;">New Measure</span>
<span class="t" style="left:971.7px;top:55.0px;font-size:10.8px;color:#3a3a3a;letter-spacing:0.30px;">New Column</span>
<span class="t" style="left:971.7px;top:77.0px;font-size:10.8px;color:#3a3a3a;letter-spacing:0.22px;">New Quick Measure</span>
<span class="t" style="left:981.6px;top:100.2px;font-size:10.8px;color:#4a4a4a;letter-spacing:0.26px;">Calculations</span>
<span class="t" style="left:1090.5px;top:66.6px;font-size:10.8px;color:#3a3a3a;letter-spacing:0.24px;">Publish</span>
<span class="t" style="left:1095.7px;top:100.2px;font-size:10.8px;color:#4a4a4a;letter-spacing:-0.18px;">Share</span>
<span class="t" style="left:74.2px;top:134.6px;font-size:11px;color:#4a4a4a;letter-spacing:-0.20px;">HoleFoods</span>
<span class="t" style="left:74.2px;top:172.6px;font-size:8.4px;color:#a6a6a6;letter-spacing:0.02px;">UnitsSold</span>
<span class="t" style="left:198.0px;top:202.9px;font-size:6.6px;color:#777;letter-spacing:-0.09px;">2000</span>
<span class="t" style="left:74.3px;top:287.8px;font-size:6.6px;color:#777;">0</span>
<span class="t" style="left:222.0px;top:287.8px;font-size:6.6px;color:#777;letter-spacing:-0.22px;">3000</span>
<span class="t" style="left:130.4px;top:254.8px;font-size:26px;color:#3a3a3a;letter-spacing:2.05px;transform:scaleX(0.78);transform-origin:0 0;-webkit-text-stroke:0.6px #fff;">1723</span>
<span class="t" style="left:278.8px;top:172.5px;font-size:8.4px;color:#a6a6a6;letter-spacing:0.07px;">AmountOfSale by Year</span>
<span class="t" style="left:314.4px;top:224.1px;font-size:38px;color:#262626;letter-spacing:1.93px;transform:scaleX(0.78);transform-origin:0 0;-webkit-text-stroke:0.6px #e1e1e1;">1,65K</span>
<span class="t" style="left:78.4px;top:336.6px;font-size:7.6px;color:#fff;font-weight:700;letter-spacing:-0.15px;">Name</span>
<span class="t" style="left:194.3px;top:336.6px;font-size:7.6px;color:#fff;font-weight:700;letter-spacing:-0.34px;">UnitsSold</span>
<span class="t" style="left:78.4px;top:356.9px;font-size:7.3px;color:#747474;letter-spacing:-0.28px;">BAGELS (DOZEN)</span>
<span class="t" style="left:223.3px;top:356.9px;font-size:7.3px;color:#747474;">8</span>
<span class="t" style="left:78.4px;top:372.9px;font-size:7.3px;color:#747474;letter-spacing:-0.22px;">BUNDT CAKE</span>
<span class="t" style="left:219.3px;top:372.9px;font-size:7.3px;color:#747474;">82</span>
<span class="t" style="left:78.4px;top:389.0px;font-size:7.3px;color:#747474;letter-spacing:-0.12px;">CALAMARI (FROZEN)</span>
<span class="t" style="left:215.8px;top:389.0px;font-size:7.3px;color:#747474;">119</span>
<span class="t" style="left:78.4px;top:405.0px;font-size:7.3px;color:#747474;letter-spacing:-0.35px;">CHEERIOS (BOX)</span>
<span class="t" style="left:219.3px;top:405.0px;font-size:7.3px;color:#747474;">79</span>
<span class="t" style="left:78.4px;top:421.0px;font-size:7.3px;color:#747474;letter-spacing:-0.11px;">DONUTS (DOZEN)</span>
<span class="t" style="left:219.3px;top:421.0px;font-size:7.3px;color:#747474;">13</span>
<span class="t" style="left:78.4px;top:437.0px;font-size:7.3px;color:#747474;letter-spacing:-0.20px;">FREE-RANGE DONUTS (DOZEN)</span>
<span class="t" style="left:215.2px;top:437.0px;font-size:7.3px;color:#747474;">138</span>
<span class="t" style="left:78.4px;top:453.0px;font-size:7.3px;color:#747474;letter-spacing:-0.25px;">FRUIT LOOPS (BOX)</span>
<span class="t" style="left:215.2px;top:453.0px;font-size:7.3px;color:#747474;">154</span>
<span class="t" style="left:78.4px;top:469.1px;font-size:7.3px;color:#747474;letter-spacing:-0.41px;">LIFESAVERS (ROLL)</span>
<span class="t" style="left:219.3px;top:469.1px;font-size:7.3px;color:#747474;">17</span>
<span class="t" style="left:78.4px;top:485.1px;font-size:7.3px;color:#747474;letter-spacing:0.10px;">ONION RING</span>
<span class="t" style="left:215.2px;top:485.1px;font-size:7.3px;color:#747474;">266</span>
<span class="t" style="left:78.4px;top:501.1px;font-size:7.3px;color:#747474;letter-spacing:-0.22px;">PENNE (BOX)</span>
<span class="t" style="left:215.2px;top:501.1px;font-size:7.3px;color:#747474;">151</span>
<span class="t" style="left:78.4px;top:517.1px;font-size:7.3px;color:#747474;letter-spacing:-0.21px;">PINEAPPLE RINGS (CAN)</span>
<span class="t" style="left:219.3px;top:517.1px;font-size:7.3px;color:#747474;">78</span>
<span class="t" style="left:78.4px;top:533.1px;font-size:7.3px;color:#747474;letter-spacing:-0.43px;">PRETZELS (BAG)</span>
<span class="t" style="left:215.8px;top:533.1px;font-size:7.3px;color:#747474;">115</span>
<span class="t" style="left:78.4px;top:549.2px;font-size:7.3px;color:#747474;letter-spacing:-0.40px;">SWISS CHEESE (SLICED)</span>
<span class="t" style="left:219.3px;top:549.2px;font-size:7.3px;color:#747474;">89</span>
<span class="t" style="left:78.4px;top:565.2px;font-size:7.3px;color:#747474;letter-spacing:-0.27px;">TORTELLINI (FROZEN)</span>
<span class="t" style="left:215.2px;top:565.2px;font-size:7.3px;color:#747474;">105</span>
<span class="t" style="left:78.4px;top:581.2px;font-size:7.3px;color:#747474;letter-spacing:-0.33px;">UNSALTED PRETZELS (BAG)</span>
<span class="t" style="left:215.2px;top:581.2px;font-size:7.3px;color:#747474;">103</span>
<span class="t" style="left:78.4px;top:597.2px;font-size:7.3px;color:#747474;letter-spacing:-0.13px;">ZITI (BOX)</span>
<span class="t" style="left:215.2px;top:597.2px;font-size:7.3px;color:#747474;">206</span>
<span class="t" style="left:78.4px;top:612.2px;font-size:7.6px;color:#222;font-weight:700;letter-spacing:-0.04px;">Total</span>
<span class="t" style="left:210.4px;top:612.2px;font-size:7.6px;color:#222;font-weight:700;letter-spacing:0.02px;">1723</span>
<span class="t" style="left:511.2px;top:130.2px;font-size:8.4px;color:#a0a0a0;letter-spacing:-0.06px;">Sales by Year and Region</span>
<span class="t" style="left:511.2px;top:149.5px;font-size:7.6px;color:#666;font-weight:700;letter-spacing:-0.07px;">Name</span>
<span class="t" style="left:546.2px;top:149.6px;font-size:7.4px;color:#666;letter-spacing:-0.24px;">ASIA</span>
<span class="t" style="left:574.1px;top:149.6px;font-size:7.4px;color:#666;letter-spacing:-0.54px;">EUROPE</span>
<span class="t" style="left:614.1px;top:149.6px;font-size:7.4px;color:#666;letter-spacing:-0.10px;">N. AMERICA</span>
<span class="t" style="left:667.8px;top:149.6px;font-size:7.4px;color:#666;letter-spacing:-0.17px;">S. AMERICA</span>
<span class="t" style="left:511.4px;top:166.3px;font-size:7.2px;color:#999;">1.000</span>
<span class="t" style="left:517.4px;top:192.7px;font-size:7.2px;color:#999;">800</span>
<span class="t" style="left:517.4px;top:219.1px;font-size:7.2px;color:#999;">600</span>
<span class="t" style="left:517.4px;top:245.5px;font-size:7.2px;color:#999;">400</span>
<span class="t" style="left:517.4px;top:271.9px;font-size:7.2px;color:#999;">200</span>
<span class="t" style="left:525.4px;top:298.3px;font-size:7.2px;color:#999;">0</span>
<span class="t" style="left:535.6px;top:305.6px;font-size:7.2px;color:#999;letter-spacing:0.12px;">2014</span>
<span class="t" style="left:616.8px;top:305.6px;font-size:7.2px;color:#999;letter-spacing:0.12px;">2015</span>
<span class="t" style="left:698.0px;top:305.6px;font-size:7.2px;color:#999;letter-spacing:0.12px;">2016</span>
<span class="t" style="left:778.8px;top:305.6px;font-size:7.2px;color:#999;letter-spacing:0.12px;">2017</span>
<span class="t" style="left:859.5px;top:305.6px;font-size:7.2px;color:#999;letter-spacing:0.12px;">2018</span>
<span class="t" style="left:940.5px;top:305.6px;font-size:7.2px;color:#999;letter-spacing:0.12px;">2019</span>
<span class="t" style="left:99.6px;top:669.1px;font-size:11.8px;color:#505050;letter-spacing:-0.57px;">Page 1</span>
<span class="t" style="left:5.5px;top:698.8px;font-size:10.9px;color:#444;letter-spacing:-0.59px;z-index:6;">PAGE 1 OF 1</span>
<span class="t" style="left:1143.0px;top:698.9px;font-size:10.9px;color:#444;letter-spacing:-0.01px;z-index:6;">Storage Mode: DirectQuery (click to change)</span>
<span class="t" style="left:1017.7px;top:131.9px;font-size:15px;color:#3b3a39;letter-spacing:0.47px;-webkit-text-stroke:0.45px #3b3a39;">Visualizations</span>
<span class="t" style="left:1101.2px;top:263.2px;font-size:20.6px;color:#8aa5ca;font-weight:700;letter-spacing:-3.28px;">R</span>
<span class="t" style="left:1126.8px;top:266.0px;font-size:13px;color:#8aa5ca;font-weight:700;letter-spacing:-0.05px;">Py</span>
<span class="t" style="left:1151.8px;top:200.4px;font-size:12.2px;color:#3a3a3a;font-weight:700;letter-spacing:-0.84px;">KPI</span>
<span class="t" style="left:1017.6px;top:356.2px;font-size:11.7px;color:#333;letter-spacing:0.12px;">Indicator</span>
<span class="t" style="left:1017.6px;top:385.2px;font-size:11.7px;color:#333;letter-spacing:0.03px;">AmountOfSale</span>
<span class="t" style="left:1017.6px;top:418.2px;font-size:11.7px;color:#333;letter-spacing:-0.28px;">Trend axis</span>
<span class="t" style="left:1017.6px;top:447.2px;font-size:11.7px;color:#333;letter-spacing:-0.41px;">Year</span>
<span class="t" style="left:1017.6px;top:479.6px;font-size:11.7px;color:#333;letter-spacing:-0.04px;">Target goals</span>
<span class="t" style="left:1020.7px;top:507.9px;font-size:11.7px;color:#333;letter-spacing:0.09px;">Add data fields here</span>
<span class="t" style="left:1019.7px;top:544.2px;font-size:14.7px;color:#3b3a39;letter-spacing:1.02px;-webkit-text-stroke:0.45px #3b3a39;">Drillthrough</span>
<span class="t" style="left:1014.6px;top:577.4px;font-size:11.7px;color:#333;letter-spacing:0.05px;">Cross-report</span>
<span class="t" style="left:1018.5px;top:601.5px;font-size:11.7px;color:#333;letter-spacing:0.31px;">Off</span>
<span class="t" style="left:1014.6px;top:631.6px;font-size:11.7px;color:#333;letter-spacing:-0.02px;">Keep all filters</span>
<span class="t" style="left:1018.5px;top:655.6px;font-size:11.7px;color:#333;letter-spacing:-0.25px;">On</span>
<span class="t" style="left:1019.0px;top:685.1px;font-size:11.7px;color:#333;letter-spacing:0.19px;">Add drillthrough fields here</span>
<span class="t" style="left:1198.5px;top:131.9px;font-size:15px;color:#3b3a39;letter-spacing:0.10px;-webkit-text-stroke:0.45px #3b3a39;">Fields</span>
<span class="t" style="left:1226.4px;top:176.7px;font-size:12.1px;color:#333;letter-spacing:-0.12px;">Search</span>
<span class="t" style="left:1234.9px;top:222.9px;font-size:11.6px;color:#333;letter-spacing:-0.23px;">Region</span>
<span class="t" style="left:1234.9px;top:305.0px;font-size:11.6px;color:#252423;letter-spacing:-0.07px;-webkit-text-stroke:0.2px #252423;">SalesTransaction</span>
<span class="t" style="left:1255.3px;top:253.6px;font-size:11.7px;color:#333;letter-spacing:-0.74px;">ID</span>
<span class="t" style="left:1255.3px;top:277.7px;font-size:11.7px;color:#333;letter-spacing:0.58px;">Name</span>
<span class="t" style="left:1255.3px;top:335.5px;font-size:11.7px;color:#333;letter-spacing:0.09px;">Actual</span>
<span class="t" style="left:1235.0px;top:358.7px;font-size:13.4px;color:#252423;transform:scaleX(1.12);transform-origin:0 0;-webkit-text-stroke:0.35px #252423;font-family:'Liberation Serif','DejaVu Serif',serif;">Σ</span>
<span class="t" style="left:1255.3px;top:359.5px;font-size:11.7px;color:#333;letter-spacing:0.09px;">AmountOfSale</span>
<span class="t" style="left:1255.3px;top:383.6px;font-size:11.7px;color:#333;letter-spacing:-0.01px;">Channel</span>
<span class="t" style="left:1255.3px;top:407.6px;font-size:11.7px;color:#333;letter-spacing:0.26px;">Comment</span>
<span class="t" style="left:1255.3px;top:431.7px;font-size:11.7px;color:#333;letter-spacing:-0.09px;">DateOfSale</span>
<span class="t" style="left:1235.0px;top:454.9px;font-size:13.4px;color:#252423;transform:scaleX(1.12);transform-origin:0 0;-webkit-text-stroke:0.35px #252423;font-family:'Liberation Serif','DejaVu Serif',serif;">Σ</span>
<span class="t" style="left:1255.3px;top:455.7px;font-size:11.7px;color:#333;letter-spacing:0.15px;">Discount</span>
<span class="t" style="left:1235.0px;top:479.0px;font-size:13.4px;color:#252423;transform:scaleX(1.12);transform-origin:0 0;-webkit-text-stroke:0.35px #252423;font-family:'Liberation Serif','DejaVu Serif',serif;">Σ</span>
<span class="t" style="left:1255.3px;top:479.8px;font-size:11.7px;color:#333;letter-spacing:-0.09px;">ID</span>
<span class="t" style="left:1235.0px;top:503.0px;font-size:13.4px;color:#252423;transform:scaleX(1.12);transform-origin:0 0;-webkit-text-stroke:0.35px #252423;font-family:'Liberation Serif','DejaVu Serif',serif;">Σ</span>
<span class="t" style="left:1255.3px;top:503.8px;font-size:11.7px;color:#333;letter-spacing:0.18px;">Latitude</span>
<span class="t" style="left:1235.0px;top:527.1px;font-size:13.4px;color:#252423;transform:scaleX(1.12);transform-origin:0 0;-webkit-text-stroke:0.35px #252423;font-family:'Liberation Serif','DejaVu Serif',serif;">Σ</span>
<span class="t" style="left:1255.3px;top:527.9px;font-size:11.7px;color:#333;letter-spacing:0.24px;">Longitude</span>
<span class="t" style="left:1255.3px;top:551.9px;font-size:11.7px;color:#333;letter-spacing:0.30px;">Outlet</span>
<span class="t" style="left:1255.3px;top:576.0px;font-size:11.7px;color:#333;letter-spacing:0.25px;">Product</span>
<span class="t" style="left:1235.0px;top:599.2px;font-size:13.4px;color:#252423;transform:scaleX(1.12);transform-origin:0 0;-webkit-text-stroke:0.35px #252423;font-family:'Liberation Serif','DejaVu Serif',serif;">Σ</span>
<span class="t" style="left:1255.3px;top:600.0px;font-size:11.7px;color:#333;letter-spacing:0.23px;">TargetAmount</span>
<span class="t" style="left:1235.0px;top:623.3px;font-size:13.4px;color:#252423;transform:scaleX(1.12);transform-origin:0 0;-webkit-text-stroke:0.35px #252423;font-family:'Liberation Serif','DejaVu Serif',serif;">Σ</span>
<span class="t" style="left:1255.3px;top:624.1px;font-size:11.7px;color:#333;letter-spacing:0.05px;">UnitsSold</span>
<span class="t" style="left:1255.3px;top:648.1px;font-size:11.7px;color:#333;letter-spacing:-0.28px;">Year</span>
<span class="t" style="left:1255.3px;top:672.2px;font-size:11.7px;color:#333;letter-spacing:-0.03px;">ZipCode</span>
</body>
</html>
